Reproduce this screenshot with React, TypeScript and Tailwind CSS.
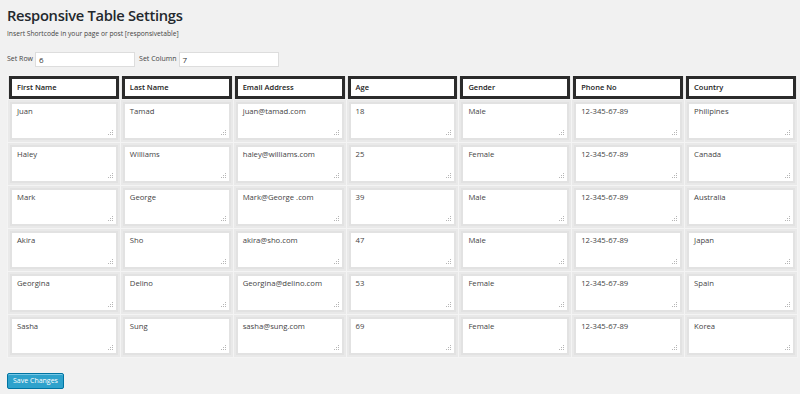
import React from 'react';

const columns = ['First Name', 'Last Name', 'Email Address', 'Age', 'Gender', 'Phone No', 'Country'];

const rows = [
  ['Juan', 'Tamad', 'juan@tamad.com', '18', 'Male', '12-345-67-89', 'Philipines'],
  ['Haley', 'Williams', 'haley@williams.com', '25', 'Female', '12-345-67-89', 'Canada'],
  ['Mark', 'George', 'Mark@George .com', '39', 'Male', '12-345-67-89', 'Australia'],
  ['Akira', 'Sho', 'akira@sho.com', '47', 'Male', '12-345-67-89', 'Japan'],
  ['Georgina', 'Delino', 'Georgina@delino.com', '53', 'Female', '12-345-67-89', 'Spain'],
  ['Sasha', 'Sung', 'sasha@sung.com', '69', 'Female', '12-345-67-89', 'Korea'],
];

const Grip = () => (
  <svg
    width="6"
    height="6"
    viewBox="0 0 6 6"
    className="absolute bottom-[2px] right-[2px]"
  >
    <rect x="4" y="0" width="1" height="1" fill="#b5b5b5" />
    <rect x="2" y="2" width="1" height="1" fill="#b5b5b5" />
    <rect x="4" y="2" width="1" height="1" fill="#b5b5b5" />
    <rect x="0" y="4" width="1" height="1" fill="#b5b5b5" />
    <rect x="2" y="4" width="1" height="1" fill="#b5b5b5" />
    <rect x="4" y="4" width="1" height="1" fill="#b5b5b5" />
  </svg>
);

export default function App() {
  return (
    <div className="min-h-[394px] bg-[#f1f1f1] px-[7px] pt-[3px] text-[#444] font-['Open_Sans',sans-serif]">
      <h1 className="text-[14.7px] leading-[24px] font-semibold tracking-[-0.3px] text-[#23282d]">
        Responsive Table Settings
      </h1>
      <p className="mt-[2px] text-[6.7px] leading-[10px]">
        Insert Shortcode in your page or post [responsivetable]
      </p>

      <div className="mt-[13px] flex items-center text-[7px]">
        <span className="mr-[2px]">Set Row</span>
        <div className="flex h-[15px] w-[100px] items-center border border-[#ddd] bg-white px-[3px] text-[8px] text-[#333]">
          6
        </div>
        <span className="ml-[4px] mr-[2px]">Set Column</span>
        <div className="flex h-[15px] w-[100px] items-center border border-[#ddd] bg-white px-[3px] text-[8px] text-[#333]">
          7
        </div>
      </div>

      <table className="mt-[8px] w-[791px] table-fixed border-collapse bg-[#e9e9e9]">
        <thead>
          <tr>
            {columns.map((c) => (
              <th key={c} className="border border-[#f4f4f4] px-[1px] py-0 text-left">
                <div className="flex h-[23px] items-center border-[3px] border-[#2b2b2b] bg-white px-[5px] text-[7.5px] font-semibold text-[#222]">
                  {c}
                </div>
              </th>
            ))}
          </tr>
        </thead>
        <tbody>
          {rows.map((r, i) => (
            <tr key={i}>
              {r.map((v, j) => (
                <td key={j} className="border border-[#f4f4f4] p-[2px]">
                  <div className="relative h-[38px] border-2 border-[#e2e2e2] bg-white px-[5px] pt-[2px] text-[7.7px] leading-[11px] text-[#444]">
                    {v}
                    <Grip />
                  </div>
                </td>
              ))}
            </tr>
          ))}
        </tbody>
      </table>

      <button
        type="button"
        className="mt-[15px] h-[16px] rounded-[2px] border border-[#0074a2] bg-[#2ea2cc] px-[5px] text-[7px] leading-[14px] text-white shadow-[inset_0_1px_0_#78c8e6]"
      >
        Save Changes
      </button>
    </div>
  );
}
